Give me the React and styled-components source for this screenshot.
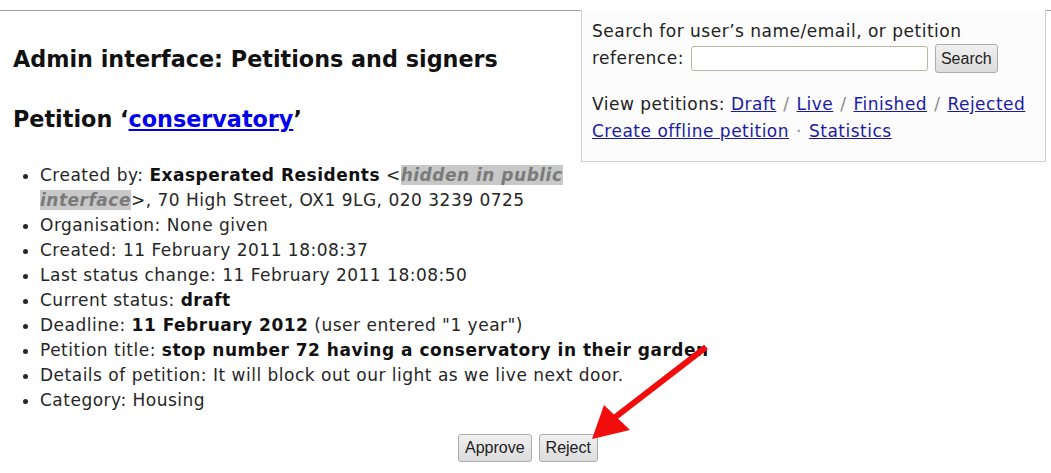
import React from "react";
import styled, { createGlobalStyle } from "styled-components";

const GlobalStyle = createGlobalStyle`
  body {
    margin: 0;
    background: #ffffff;
    font-family: "DejaVu Sans", sans-serif;
    color: #222;
  }
`;

const Page = styled.div`
  position: relative;
  width: 1051px;
  height: 473px;
  overflow: hidden;
`;

const TopRule = styled.div`
  height: 10px;
  border-bottom: 1px solid #a0a0a0;
`;

const Content = styled.div`
  padding: 0 0 0 13px;
`;

const SearchBox = styled.div`
  float: right;
  width: 453px;
  margin: -1px 5px 16px 0;
  padding: 9px 0 16px 10px;
  border: 1px solid #d0d0d0;
  border-top: none;
  background: #fcfcfc;
  font-size: 17px;
  letter-spacing: 0.5px;
  line-height: 25px;
  color: #222;
`;

const SearchLine = styled.div`
  margin-bottom: 18px;
`;

const NavLine = styled.div`
  line-height: 27px;
`;

const SearchInput = styled.input`
  box-sizing: border-box;
  width: 237px;
  height: 25px;
  margin: 0 7px 0 7px;
  padding: 0 2px;
  border: 1px solid #b8b6a4;
  border-radius: 3px;
  vertical-align: middle;
`;

const Button = styled.button`
  box-sizing: border-box;
  font-family: "Liberation Sans", Arial, sans-serif;
  font-size: 16px;
  letter-spacing: 0;
  color: #222;
  height: ${(props) => (props.tall ? "29px" : "28px")};
  padding: 0 ${(props) => (props.tall ? "5px" : "6px")};
  border: 1px solid #adadad;
  border-radius: 3px;
  background: linear-gradient(#f0f0f0, #dcdcdc);
  vertical-align: middle;
`;

const Link = styled.a`
  color: ${(props) => (props.bright ? "#0000ee" : "#1a1aa6")};
  text-decoration: underline;
`;

const Sep = styled.span`
  color: #888;
  margin: 0 7px;
`;

const Title = styled.h2`
  margin: 0;
  padding-top: 35px;
  font-size: 22.3px;
  line-height: 26px;
  font-weight: bold;
  color: #111;
`;

const SubTitle = styled(Title)`
  padding-top: 34px;
`;

const Details = styled.ul`
  margin: 31px 0 0 0;
  padding-left: 27px;
  font-size: 17px;
  letter-spacing: 0.5px;
  line-height: 25px;
  color: #262626;
  b {
    color: #111;
  }
`;

const Hidden = styled.i`
  font-weight: bold;
  color: #7a7a7a;
  background: #c8c8c8;
`;

const Actions = styled.div`
  display: flex;
  justify-content: center;
  gap: 7px;
  margin-top: 21px;
  padding-right: 8px;
`;

const Arrow = styled.svg`
  position: absolute;
  left: 0;
  top: 0;
  pointer-events: none;
`;

export default function App() {
  return (
    <Page>
      <GlobalStyle />
      <TopRule />
      <Content>
        <SearchBox>
          <SearchLine>
            Search for user’s name/email, or petition
            <br />
            reference:
            <SearchInput type="text" />
            <Button tall>Search</Button>
          </SearchLine>
          <NavLine>
            View petitions: <Link href="#">Draft</Link>
            <Sep>/</Sep>
            <Link href="#">Live</Link>
            <Sep>/</Sep>
            <Link href="#">Finished</Link>
            <Sep>/</Sep>
            <Link href="#">Rejected</Link>
            <br />
            <Link href="#">Create offline petition</Link>
            <Sep>·</Sep>
            <Link href="#">Statistics</Link>
          </NavLine>
        </SearchBox>
        <Title>Admin interface: Petitions and signers</Title>
        <SubTitle>
          Petition ‘<Link bright href="#">conservatory</Link>’
        </SubTitle>
        <Details>
          <li>
            Created by: <b>Exasperated Residents</b> &lt;
            <Hidden>hidden in public interface</Hidden>&gt;, 70 High Street,
            OX1 9LG, 020 3239 0725
          </li>
          <li>Organisation: None given</li>
          <li>Created: 11 February 2011 18:08:37</li>
          <li>Last status change: 11 February 2011 18:08:50</li>
          <li>
            Current status: <b>draft</b>
          </li>
          <li>
            Deadline: <b>11 February 2012</b> (user entered "1 year")
          </li>
          <li>
            Petition title: <b>stop number 72 having a conservatory in their garden</b>
          </li>
          <li>Details of petition: It will block out our light as we live next door.</li>
          <li>Category: Housing</li>
        </Details>
        <Actions>
          <Button>Approve</Button>
          <Button>Reject</Button>
        </Actions>
      </Content>
      <Arrow width="1051" height="473" viewBox="0 0 1051 473">
        <line x1="706" y1="347" x2="614" y2="418" stroke="#f20d0d" strokeWidth="6" />
        <polygon points="592,439 604,405 630,430" fill="#f20d0d" />
      </Arrow>
    </Page>
  );
}
